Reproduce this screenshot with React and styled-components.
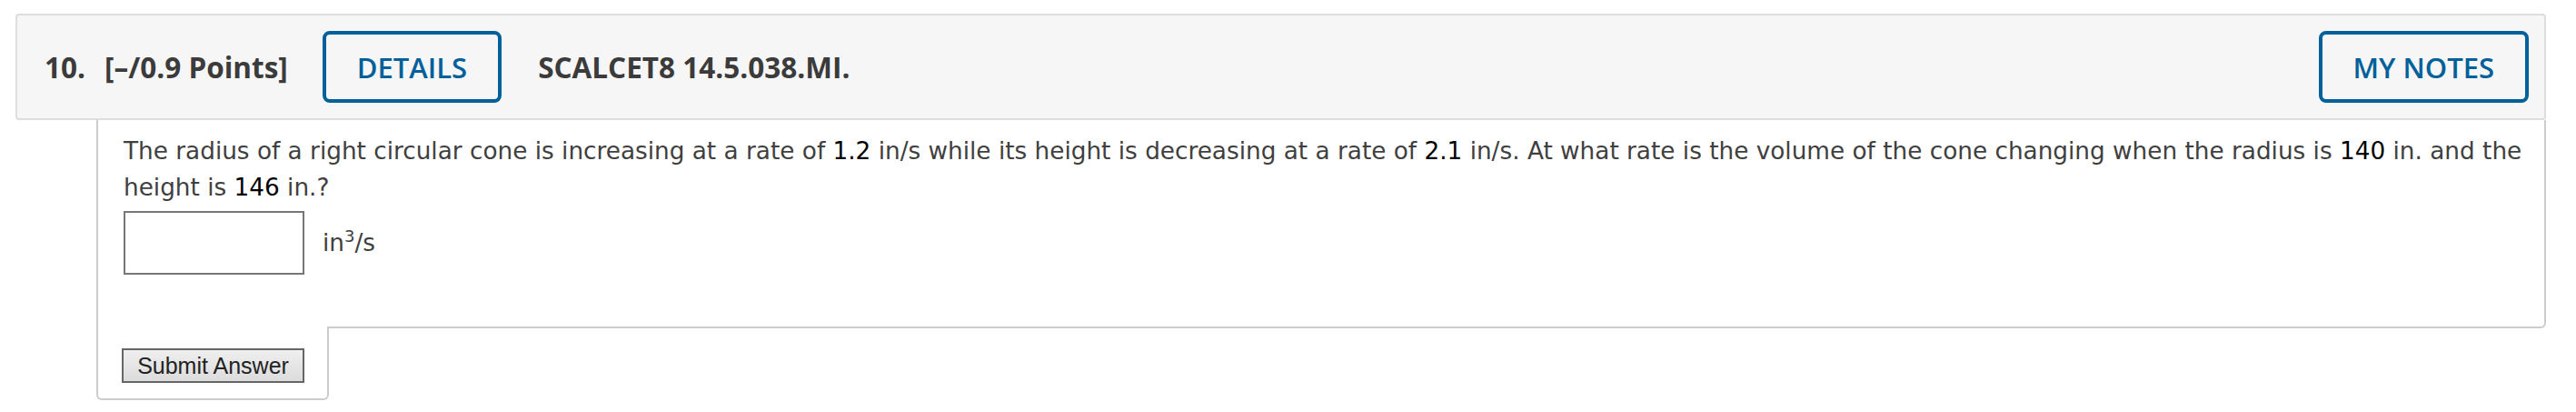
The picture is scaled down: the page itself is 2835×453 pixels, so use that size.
import styled, { createGlobalStyle } from "styled-components";

const GlobalStyle = createGlobalStyle`
  html, body {
    margin: 0;
    padding: 0;
    background: #ffffff;
  }
`;

export default function App() {
  return (
    <>
      <GlobalStyle />
      <Question>
        <Header>
          <Number>10.</Number>
          <Points>[–/0.9 Points]</Points>
          <OutlineButton>DETAILS</OutlineButton>
          <Code>SCALCET8 14.5.038.MI.</Code>
          <Spacer />
          <OutlineButton>MY NOTES</OutlineButton>
        </Header>
        <Body>
          <Prompt>
            The radius of a right circular cone is increasing at a rate of{" "}
            <Value>1.2</Value> in/s while its height is decreasing at a rate of{" "}
            <Value>2.1</Value> in/s. At what rate is the volume of the cone
            changing when the radius is <Value>140</Value> in. and the height
            is <Value>146</Value> in.?
          </Prompt>
          <AnswerRow>
            <AnswerInput type="text" />
            <Unit>
              in<sup>3</sup>/s
            </Unit>
          </AnswerRow>
        </Body>
        <SubmitTab>
          <SubmitButton>Submit Answer</SubmitButton>
        </SubmitTab>
      </Question>
    </>
  );
}

const Question = styled.div`
  margin: 15px 33px 0 17px;
  display: flex;
  flex-direction: column;
`;

const Header = styled.div`
  display: flex;
  align-items: center;
  height: 117px;
  box-sizing: border-box;
  padding: 0 17px 0 30px;
  background: #f6f6f6;
  border: 2px solid #dddddd;
  border-radius: 4px;
  font-family: "Open Sans", "Liberation Sans", sans-serif;
  font-weight: 700;
  font-size: 31.5px;
  color: #3b3b3b;
`;

const Number = styled.span`
  margin-right: 21px;
`;

const Points = styled.span`
  margin-right: 38px;
`;

const Code = styled.span`
  margin-left: 40px;
`;

const Spacer = styled.div`
  flex: 1;
`;

const OutlineButton = styled.button`
  height: 79px;
  box-sizing: border-box;
  padding: 0 34px;
  background: transparent;
  border: 4px solid #00609a;
  border-radius: 8px;
  color: #00609a;
  font-family: "Open Sans", "Liberation Sans", sans-serif;
  font-weight: 600;
  font-size: 31px;
`;

const Body = styled.div`
  margin-left: 89px;
  padding: 14px 16px 57px 28px;
  border: 2px solid #cccccc;
  border-top: none;
  border-bottom-right-radius: 6px;
  font-family: "DejaVu Sans", Verdana, sans-serif;
  font-size: 26.3px;
  line-height: 40px;
  color: #404040;
`;

const Prompt = styled.p`
  margin: 0;
`;

const Value = styled.span`
  color: #000000;
`;

const AnswerRow = styled.div`
  display: flex;
  align-items: center;
  gap: 20px;
  margin-top: 6px;
`;

const AnswerInput = styled.input`
  width: 199px;
  height: 70px;
  box-sizing: border-box;
  border: 2px solid #777777;
  margin: 0;
`;

const Unit = styled.span`
  sup {
    font-size: 18px;
    line-height: 0;
  }
`;

const SubmitTab = styled.div`
  margin-left: 89px;
  margin-top: -2px;
  width: 256px;
  box-sizing: border-box;
  padding: 24px 0 17px 26px;
  background: #ffffff;
  border: 2px solid #cccccc;
  border-top: none;
  border-radius: 0 0 6px 6px;
`;

const SubmitButton = styled.button`
  height: 38px;
  width: 201px;
  box-sizing: border-box;
  padding: 0;
  border: 2px solid #666666;
  background: linear-gradient(#efefef, #dcdcdc);
  color: #222222;
  font-family: "Liberation Sans", Arial, sans-serif;
  font-size: 25px;
  display: block;
`;
